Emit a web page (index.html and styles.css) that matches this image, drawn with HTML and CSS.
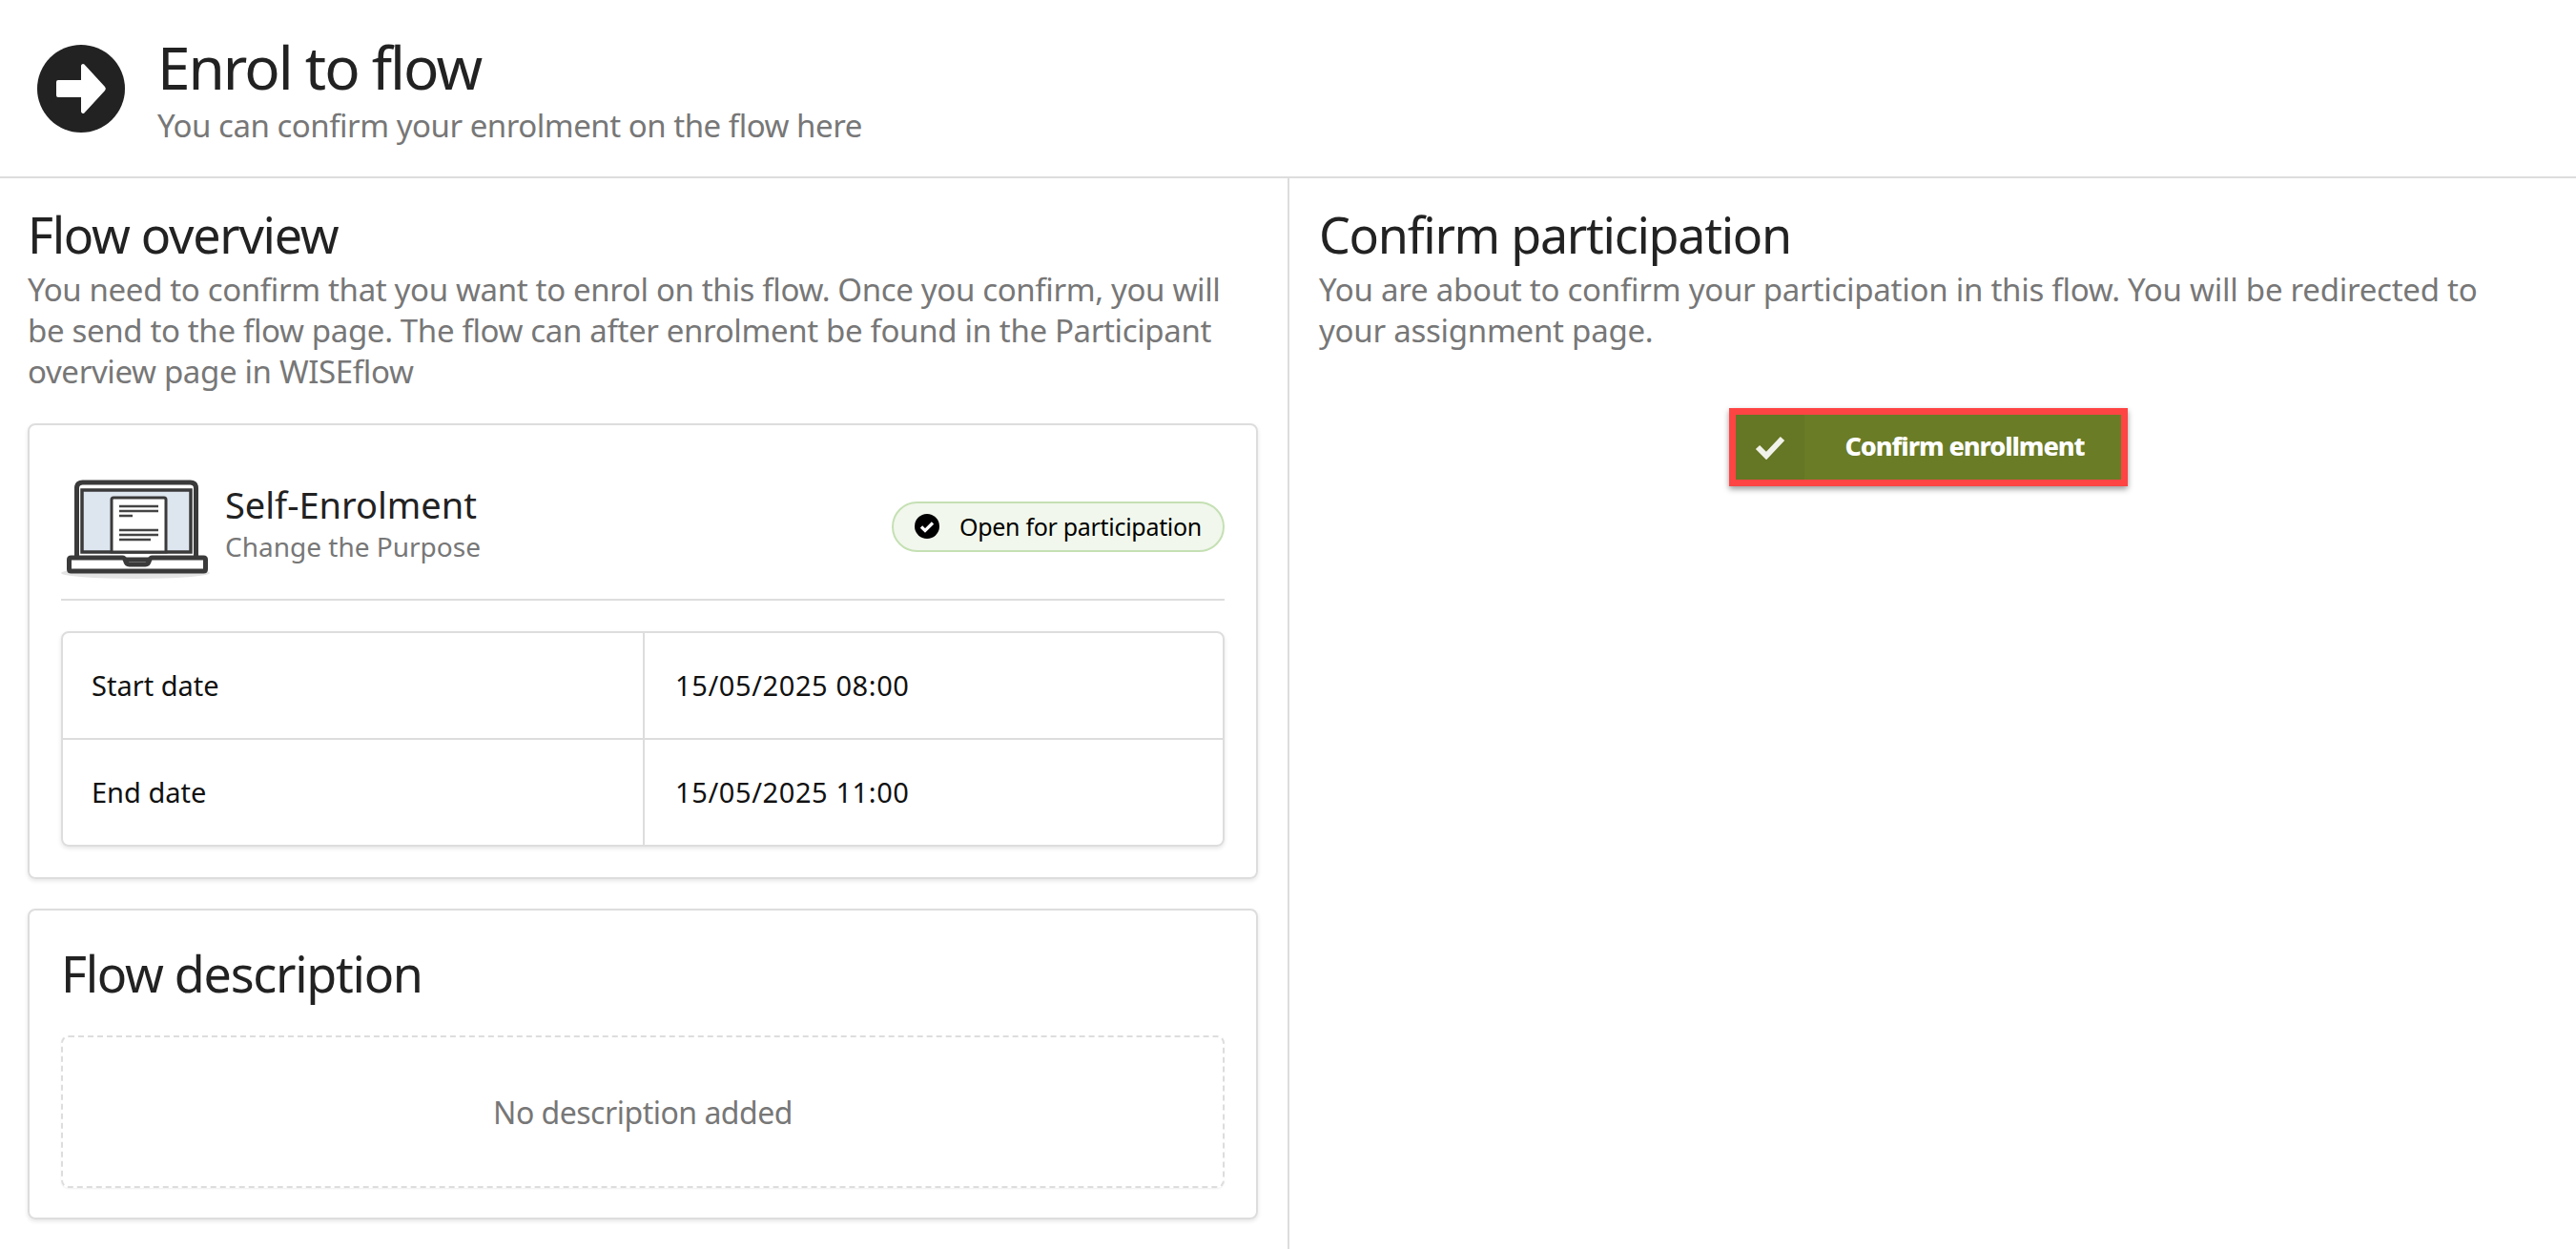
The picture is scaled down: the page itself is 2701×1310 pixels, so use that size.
FILE: index.html
```html
<!DOCTYPE html>
<html lang="en">
<head>
    <meta charset="UTF-8">
    <title>Enrol to flow</title>
    <link rel="stylesheet" href="styles.css">
</head>
<body>
    <header class="page-header">
        <svg class="header-icon" viewBox="0 0 96 96">
            <circle cx="48" cy="48" r="46" fill="#222"/>
            <path d="M24 39h24V24a2 2 0 0 1 3.4-1.4l21.6 23.5a3 3 0 0 1 0 4L51.4 73.4A2 2 0 0 1 48 72V57H24a2 2 0 0 1-2-2V41a2 2 0 0 1 2-2z" fill="#fff"/>
        </svg>
        <div>
            <h1>Enrol to flow</h1>
            <p class="subtitle">You can confirm your enrolment on the flow here</p>
        </div>
    </header>
    <main class="columns">
        <section class="col-left">
            <h2>Flow overview</h2>
            <p class="lead">You need to confirm that you want to enrol on this flow. Once you confirm, you will be send to the flow page. The flow can after enrolment be found in the Participant overview page in WISEflow</p>

            <div class="card overview-card">
                <div class="flow-head">
                    <svg class="laptop" viewBox="0 0 156 104">
                        <ellipse cx="78" cy="98" rx="78" ry="6" fill="#e4e4e4"/>
                        <path d="M16.5 84V9q0-6 6-6h113q6 0 6 6v75z" fill="#fff" stroke="#3a3a3a" stroke-width="5"/>
                        <rect x="22" y="11" width="114" height="65" fill="#dde5ef" stroke="#3a3a3a" stroke-width="3.5"/>
                        <path d="M53 76V21q0-2 2-2h53q2 0 2 2v55z" fill="#fff" stroke="#3a3a3a" stroke-width="3"/>
                        <path d="M61 28h41M61 33h41M61 38h14M61 53h41M61 58h41M61 63h33" stroke="#444" stroke-width="2.5" fill="none"/>
                        <path d="M10.500 82h54q2 0 3 3 1 4 4 4h17q3 0 4-4 1-3 3-3h54q2 0 2 2v10q0 2-2 2H10.500q-2 0-2-2V84q0-2 2-2z" fill="#fff" stroke="#3a3a3a" stroke-width="5"/>
                    </svg>
                    <div class="flow-title">
                        <div class="flow-name">Self-Enrolment</div>
                        <div class="flow-purpose">Change the Purpose</div>
                    </div>
                    <div class="status-pill">
                        <svg class="status-icon" viewBox="0 0 26 26">
                            <circle cx="13" cy="13" r="13" fill="#000"/>
                            <path d="M7 13.5l4 4 8-8" fill="none" stroke="#fff" stroke-width="3.2"/>
                        </svg>
                        <span>Open for participation</span>
                    </div>
                </div>
                <div class="date-table">
                    <div class="date-cell">Start date</div>
                    <div class="date-cell date-value">15/05/2025 08:00</div>
                    <div class="date-cell">End date</div>
                    <div class="date-cell date-value">15/05/2025 11:00</div>
                </div>
            </div>

            <div class="card description-card">
                <h2>Flow description</h2>
                <div class="empty-box">No description added</div>
            </div>
        </section>

        <section class="col-right">
            <h2>Confirm participation</h2>
            <p class="lead">You are about to confirm your participation in this flow. You will be redirected to your assignment page.</p>
            <div class="confirm-wrap">
                <button type="button" class="confirm-btn">
                    <span class="confirm-icon">
                        <svg viewBox="0 0 32 26" width="32" height="26">
                            <path d="M3 13l9 9L29 4" fill="none" stroke="#f1f2ea" stroke-width="6"/>
                        </svg>
                    </span>
                    <span class="confirm-label">Confirm enrollment</span>
                </button>
            </div>
        </section>
    </main>
</body>
</html>
```

FILE: styles.css
```css
* {
    box-sizing: border-box;
}
html, body {
    height: 100%;
}
body {
    margin: 0;
    font-family: 'Noto Sans', sans-serif;
    color: #222;
    background-color: #fff;
    overflow: hidden;
}
h1, h2, p {
    margin: 0;
    font-weight: 400;
}
.page-header {
    display: flex;
    align-items: center;
    gap: 32px;
    height: 187px;
    padding: 0 0 0 37px;
    border-bottom: 2px solid #ddd;
}
.header-icon {
    width: 96px;
    height: 96px;
    flex-shrink: 0;
}
h1 {
    font-size: 62px;
    font-weight: 450;
    line-height: 78px;
    letter-spacing: -2px;
}
.subtitle {
    font-size: 33px;
    line-height: 46px;
    color: #777;
    letter-spacing: -0.48px;
}
.columns {
    display: flex;
    height: calc(100% - 187px);
}
.col-left {
    width: 1352px;
    padding: 26px 31px 0 29px;
    border-right: 2px solid #ddd;
}
.col-right {
    flex: 1;
    padding: 26px 40px 0 31px;
}
h2 {
    margin-bottom: 3px;
    font-size: 52px;
    font-weight: 450;
    line-height: 66px;
    letter-spacing: -1.27px;
}
.lead {
    font-size: 33px;
    line-height: 43px;
    color: #777;
    letter-spacing: -0.35px;
}
.col-right .lead {
    letter-spacing: -0.25px;
}
.card {
    border: 2px solid #ddd;
    border-radius: 8px;
    box-shadow: 0 2px 4px rgba(0, 0, 0, 0.1);
    padding: 0 33px;
}
.overview-card {
    height: 478px;
    margin-top: 33px;
}
.flow-head {
    display: flex;
    align-items: center;
    height: 184px;
    padding-top: 30px;
    border-bottom: 2px solid #ddd;
}
.laptop {
    width: 156px;
    height: 104px;
    margin-top: 6px;
    flex-shrink: 0;
}
.flow-title {
    flex: 1;
    margin-left: 16px;
    padding-bottom: 6px;
}
.flow-name {
    font-size: 38px;
    line-height: 48px;
}
.flow-purpose {
    font-size: 28px;
    line-height: 40px;
    color: #777;
}
.status-pill {
    display: flex;
    align-items: center;
    gap: 21px;
    height: 53px;
    padding: 0 22px;
    background-color: #f1f7ec;
    border: 2px solid #c5e0b4;
    border-radius: 27px;
    font-size: 25px;
    letter-spacing: -0.3px;
    color: #000;
}
.status-icon {
    width: 26px;
    height: 26px;
}
.date-table {
    display: grid;
    grid-template-columns: 1fr 1fr;
    grid-template-rows: 112px 110px;
    margin-top: 32px;
    border: 2px solid #ddd;
    border-radius: 8px;
    box-shadow: 0 2px 4px rgba(0, 0, 0, 0.1);
}
.date-cell {
    display: flex;
    align-items: center;
    padding: 0 0 2px 30px;
    font-size: 29px;
    color: #111;
}
.date-cell:nth-child(-n+2) {
    border-bottom: 2px solid #ddd;
}
.date-value {
    padding-left: 32px;
    border-left: 2px solid #ddd;
    letter-spacing: 0.6px;
}
.description-card {
    height: 326px;
    margin-top: 31px;
    padding-top: 33px;
}
.empty-box {
    display: flex;
    align-items: center;
    justify-content: center;
    height: 160px;
    margin-top: 32px;
    border: 2px dashed #ddd;
    border-radius: 8px;
    box-shadow: 0 1px 2px rgba(0, 0, 0, 0.06);
    font-size: 32px;
    color: #777;
    letter-spacing: -0.5px;
}
.confirm-wrap {
    display: flex;
    justify-content: center;
    margin-top: 60px;
}
.confirm-btn {
    display: flex;
    align-items: stretch;
    width: 418px;
    height: 82px;
    padding: 0;
    background-color: #6b7c27;
    border: 7px solid #f44;
    box-shadow: 0 3px 6px rgba(0, 0, 0, 0.4);
    color: #fff;
    font-family: inherit;
}
.confirm-icon {
    display: flex;
    align-items: center;
    justify-content: center;
    width: 72px;
    background-color: #657624;
}
.confirm-label {
    flex: 1;
    align-self: center;
    padding: 0 0 3px 4px;
    text-align: center;
    font-size: 27px;
    font-weight: 800;
    letter-spacing: -1.05px;
}
```
